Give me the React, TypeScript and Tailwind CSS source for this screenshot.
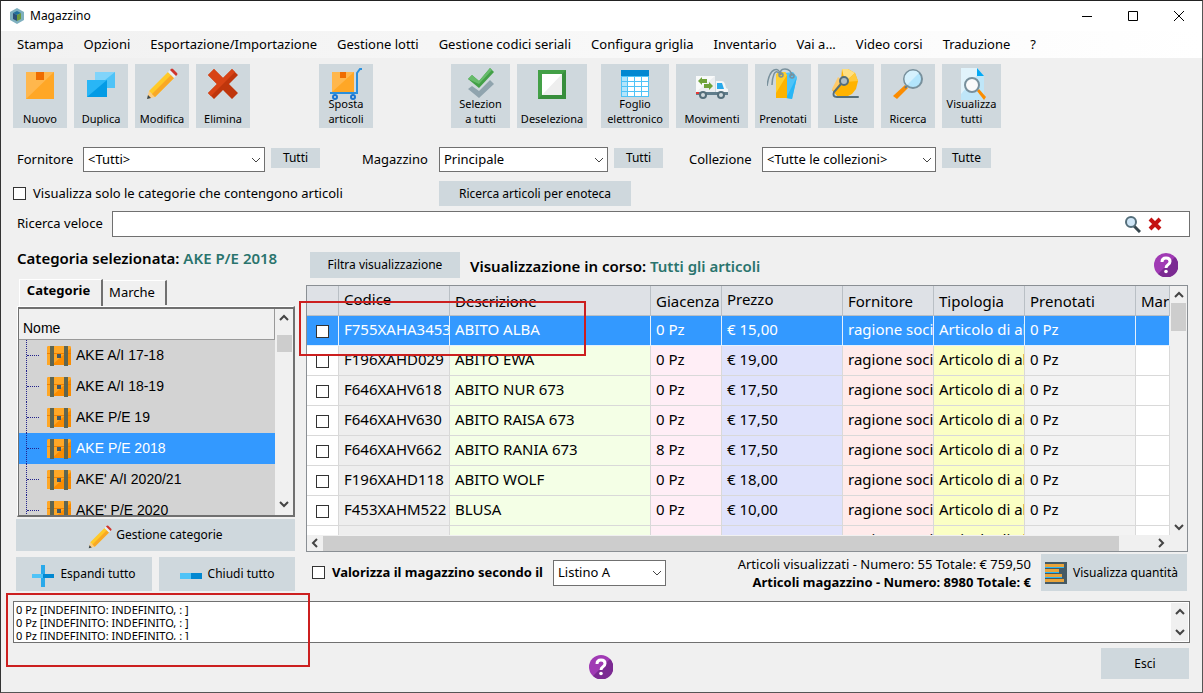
import React, { useState } from "react";

// Toolbar and button drawings

function BoxIcon() {
  return (
    <svg viewBox="0 0 32 32" className="size-8 shrink-0">
      <path d="M2 4h28v27H2z" fill="#ffa726" />
      <path d="M2 4h28L2 31z" fill="#ffb74d" />
      <path d="M12 4h8v8h-8z" fill="#ef6c00" />
    </svg>
  );
}

function DuplicateIcon() {
  return (
    <svg viewBox="0 0 32 32" className="size-8 shrink-0">
      <path d="M10 4h20v16H10z" fill="#4fc3f7" />
      <path d="M10 4h20L10 20z" fill="#81d4fa" />
      <path d="M2 12h20v17H2z" fill="#039be5" />
      <path d="M2 12h20L2 29z" fill="#29b6f6" />
    </svg>
  );
}

function PencilIcon({ className }: { className: string }) {
  return (
    <svg viewBox="0 0 32 32" className={className}>
      <path d="M1 31l2-8 6 6z" fill="#ffcc80" />
      <path d="M1 31l1-4 3 3z" fill="#37474f" />
      <path d="M3 23L22 4l6 6L9 29z" fill="#ffca28" />
      <path d="M6 26L25 7l3 3L9 29z" fill="#f9a825" />
      <path d="M22 4l2-2 6 6-2 2z" fill="#eceff1" />
      <path d="M24 2l1-1q1-1 2 0l4 4q1 1 0 2l-1 1z" fill="#d0342c" />
    </svg>
  );
}

function CrossIcon() {
  return (
    <svg viewBox="0 0 32 32" className="size-8 shrink-0">
      <path d="M7 1l9 9 9-9 6 6-9 9 9 9-6 6-9-9-9 9-6-6 9-9-9-9z" fill="#bf360c" />
      <path d="M7 1l9 9 9-9 3 3L4 28l-3-3 9-9-9-9z" fill="#d84315" />
    </svg>
  );
}

function TrolleyIcon() {
  return (
    <svg viewBox="0 0 32 32" className="size-8 shrink-0">
      <path d="M2 4h22v20H2z" fill="#ffa726" />
      <path d="M2 4h22L2 24z" fill="#ffb74d" />
      <path d="M10 4h6v6h-6z" fill="#ef6c00" />
      <path d="M32 1h-2l-3 4v20H0" fill="none" stroke="#2a8fdc" strokeWidth="2" />
      <circle cx="5" cy="29" r="2" fill="#cfd8dc" stroke="#1976d2" strokeWidth="2" />
      <circle cx="23" cy="29" r="2" fill="#cfd8dc" stroke="#1976d2" strokeWidth="2" />
    </svg>
  );
}

function DoubleCheckIcon() {
  return (
    <svg viewBox="0 0 32 32" className="size-8 shrink-0">
      <path d="M3 21l4-3 7 5 11-11 4 4-15 14z" fill="#90a4ae" />
      <path d="M3 11l4-4 7 6L25 0l4 4-15 16z" fill="#43a047" />
      <path d="M3 11l4-4 7 6L25 0l2 2-13 14z" fill="#66bb6a" />
    </svg>
  );
}

function EmptySquareIcon() {
  return (
    <svg viewBox="0 0 32 32" className="size-8 shrink-0">
      <path d="M2 2h28v29H2z" fill="#388e3c" />
      <path d="M2 2h28L2 31z" fill="#43a047" />
      <path d="M6 6h20v21H6z" fill="#eeeeee" />
      <path d="M6 6h20L6 27z" fill="#fff" />
    </svg>
  );
}

function SheetIcon() {
  return (
    <svg viewBox="0 0 32 32" className="size-8 shrink-0">
      <path d="M2 2h28v27H2z" fill="#4fc3f7" />
      <path d="M2 2h28v6H2z" fill="#0288d1" />
      <path d="M3 9h5v4H3zM3 14h5v4H3zM3 19h5v4H3zM3 24h5v4H3z" fill="#b3e5fc" />
      <path
        d="M9 9h6v4H9zM16 9h6v4h-6zM23 9h6v4h-6zM9 14h6v4H9zM16 14h6v4h-6zM23 14h6v4h-6zM9 19h6v4H9zM16 19h6v4h-6zM23 19h6v4h-6zM9 24h6v4H9zM16 24h6v4h-6zM23 24h6v4h-6z"
        fill="#fff"
      />
    </svg>
  );
}

function TruckIcon() {
  return (
    <svg viewBox="0 0 32 32" className="size-8 shrink-0">
      <path d="M0 8h19v16H0z" fill="#eceff1" />
      <path d="M0 8h19L0 24z" fill="#f8fafa" />
      <path d="M20 13h6q2 0 3 3l1 4 2 1v4H20z" fill="#f4f6f7" />
      <path d="M21 15h5l2 6h-7z" fill="#29a9ea" />
      <path d="M0 24h32v3H0z" fill="#607d8b" />
      <path d="M0 24h3v2H0z" fill="#e53935" />
      <path d="M2 13l4-4v2h5v4H6v2zM17 18l-4-4v2H8v4h5v2z" fill="#6fa33a" />
      <circle cx="7" cy="27" r="4" fill="#546e7a" />
      <circle cx="7" cy="27" r="2" fill="#cfd8dc" />
      <circle cx="25" cy="27" r="4" fill="#546e7a" />
      <circle cx="25" cy="27" r="2" fill="#cfd8dc" />
    </svg>
  );
}

function TagsIcon() {
  return (
    <svg viewBox="0 0 32 32" className="size-8 shrink-0">
      <path d="M18 5l8-1 4 5-5 22-10-2z" fill="#4fc3f7" />
      <path d="M30 9l-5 22-6-1z" fill="#29b6f6" />
      <path d="M9 7l2-3h7l2 3v23H9z" fill="#ffb300" />
      <path d="M9 7l2-3h7l2 3L9 25z" fill="#ffd02e" />
      <g fill="none" stroke="#78909c" strokeWidth="1.500">
        <path d="M14 7Q12 0 7 2T0 18" />
        <path d="M14 7Q9 1 7 6T5 17" />
        <path d="M14 7q-2-6 4-6t7 7" />
        <circle cx="14" cy="7" r="2" />
        <circle cx="25" cy="8" r="2" />
      </g>
    </svg>
  );
}

function ListIcon() {
  return (
    <svg viewBox="0 0 32 32" className="size-8 shrink-0">
      <path d="M12 1l6 0 7 4 3 8-2 8-4 5-6 3H8l-6-7 9-9z" fill="#ffb300" />
      <path d="M12 1l6 0 7 4-10 9z" fill="#ffe082" />
      <path d="M25 5l3 8-13 1z" fill="#ffc93a" />
      <path d="M8 9l4 3-8 11-2-2z" fill="#ffca6a" />
      <path
        d="M11 16l-7 8q-2 5 3 5h21"
        fill="none"
        stroke="#546e7a"
        strokeWidth="2"
        strokeLinecap="round"
      />
      <circle cx="14" cy="13" r="4" fill="#b0bec5" stroke="#546e7a" strokeWidth="2" />
    </svg>
  );
}

function LensIcon() {
  return (
    <svg viewBox="0 0 32 32" className="size-8 shrink-0">
      <path d="M13 17l3 3L5 31l-4-3z" fill="#fb8c00" />
      <path d="M13 20l4-4" stroke="#607d8b" strokeWidth="2" />
      <circle cx="21" cy="11" r="9" fill="#b3e5fc" stroke="#78909c" strokeWidth="2" />
      <path d="M15 17A8 8 0 0 1 27 5z" fill="#d5f1fd" />
    </svg>
  );
}

function PageLensIcon() {
  return (
    <svg viewBox="0 0 32 32" className="size-8 shrink-0">
      <path d="M5 0h16l7 8v24H5z" fill="#bfe6f8" />
      <path d="M5 0h16l3 4L5 26z" fill="#e1f3fb" />
      <path d="M21 0l7 8h-7z" fill="#03a9f4" />
      <path d="M21 23l2-2 7 8-2 3z" fill="#fb8c00" />
      <circle cx="16" cy="17" r="7" fill="#fafafa" stroke="#78909c" strokeWidth="2" />
    </svg>
  );
}

function ChestIcon() {
  return (
    <svg viewBox="0 0 24 20" className="h-5 w-6 shrink-0">
      <path d="M0 2q0-2 2-2h20q2 0 2 2v17H0z" fill="#fb8c00" />
      <path d="M0 2q0-2 2-2h20q2 0 2 2L5 19H0z" fill="#ffa726" />
      <path d="M0 7h24v1H0z" fill="#ef8000" />
      <path d="M3 0h4v20H3zM17 0h4v20h-4z" fill="#5f6550" />
      <path d="M10 8h4v4h-4z" fill="#455a64" />
    </svg>
  );
}

function HelpIcon() {
  return (
    <svg viewBox="0 0 24 24" className="size-6 shrink-0">
      <circle cx="12" cy="12" r="12" fill="#a03ab4" />
      <path d="M21 4A12 12 0 0 1 4 21z" fill="#7b2a92" />
      <path
        d="M8 9q0-4 4-4t4 3.500q0 2-2 3.200T12 15"
        fill="none"
        stroke="#fff"
        strokeWidth="3"
      />
      <circle cx="12" cy="18.500" r="1.800" fill="#fff" />
    </svg>
  );
}

function Chevron({ className }: { className: string }) {
  return (
    <svg viewBox="0 0 10 10" className={className} fill="none" stroke="currentColor">
      <path d="M1 3l4 4 4-4" />
    </svg>
  );
}

// Building blocks

interface ToolButtonProps {
  label: string;
  className: string;
  children: React.ReactNode;
}

function ToolButton({ label, className, children }: ToolButtonProps) {
  return (
    <button
      type="button"
      className={`flex h-16 shrink-0 flex-col items-center bg-[#cfd8dd] pt-1 pb-[2px] hover:bg-[#c0ccd3] ${className}`}
    >
      <span className="h-7">{children}</span>
      <span className="mt-auto text-[11px] leading-[15px] whitespace-pre-line">{label}</span>
    </button>
  );
}

interface ComboProps {
  id: string;
  options: string[];
  className: string;
}

function Combo({ id, options, className }: ComboProps) {
  return (
    <div className={`relative shrink-0 ${className}`}>
      <select
        id={id}
        className="h-full w-full appearance-none border border-[#707070] bg-white pr-5 pl-1 text-[13px] outline-none"
      >
        {options.map((o) => (
          <option key={o}>{o}</option>
        ))}
      </select>
      <Chevron className="pointer-events-none absolute top-2 right-1 size-[10px] text-[#444]" />
    </div>
  );
}

const checkboxClass =
  "size-[13px] shrink-0 appearance-none border border-[#333] bg-white checked:bg-[#3399ff]";

const buttonClass = "shrink-0 bg-[#cfd8dd] text-[12px] hover:bg-[#c0ccd3]";

// Data

const menu = [
  "Stampa",
  "Opzioni",
  "Esportazione/Importazione",
  "Gestione lotti",
  "Gestione codici seriali",
  "Configura griglia",
  "Inventario",
  "Vai a...",
  "Video corsi",
  "Traduzione",
  "?",
];

const categories = [
  "AKE A/I 17-18",
  "AKE A/I 18-19",
  "AKE P/E 19",
  "AKE P/E 2018",
  "AKE' A/I 2020/21",
  "AKE' P/E 2020",
];

interface Article {
  code: string;
  name: string;
  stock: string;
  price: string;
}

const articles: Article[] = [
  { code: "F755XAHA3453", name: "ABITO ALBA", stock: "0 Pz", price: "€ 15,00" },
  { code: "F196XAHD029", name: "ABITO EWA", stock: "0 Pz", price: "€ 19,00" },
  { code: "F646XAHV618", name: "ABITO NUR 673", stock: "0 Pz", price: "€ 17,50" },
  { code: "F646XAHV630", name: "ABITO RAISA 673", stock: "0 Pz", price: "€ 17,50" },
  { code: "F646XAHV662", name: "ABITO RANIA 673", stock: "8 Pz", price: "€ 17,50" },
  { code: "F196XAHD118", name: "ABITO WOLF", stock: "0 Pz", price: "€ 18,00" },
  { code: "F453XAHM522", name: "BLUSA", stock: "0 Pz", price: "€ 10,00" },
  { code: "", name: "", stock: "", price: "" },
];

const noteLine = "0 Pz [INDEFINITO: INDEFINITO, : ]";

function TitleBar() {
  return (
    <header className="flex h-[30px] items-center bg-white pl-[9px]">
      <svg viewBox="0 0 14 16" className="h-4 w-[14px]">
        <path d="M7 0l7 4v8l-7 4-7-4V4z" fill="#7fb0bf" />
        <path d="M7 3l4 2-4 2-4-2z" fill="#1f6f9b" />
        <path d="M3 5l4 2v6l-4-2z" fill="#2b4f76" />
        <path d="M7 7l4-2v6l-4 2z" fill="#6d9a3c" />
      </svg>
      <h1 className="ml-[6px] text-[12px]">Magazzino</h1>
      <div className="ml-auto flex h-full">
        <button type="button" aria-label="Riduci a icona" className="grid w-[46px] place-items-center">
          <svg viewBox="0 0 12 12" className="size-3" stroke="#000">
            <path d="M1 6.500h10" />
          </svg>
        </button>
        <button type="button" aria-label="Ingrandisci" className="grid w-[46px] place-items-center">
          <svg viewBox="0 0 12 12" className="size-3" stroke="#000" fill="none">
            <path d="M1.500 1.500h9v9h-9z" />
          </svg>
        </button>
        <button type="button" aria-label="Chiudi" className="grid w-[46px] place-items-center">
          <svg viewBox="0 0 12 12" className="size-3" stroke="#000">
            <path d="M1 1l10 10M11 1L1 11" />
          </svg>
        </button>
      </div>
    </header>
  );
}

function Toolbar() {
  return (
    <div className="flex pt-[6px] pl-3">
      <div className="flex gap-[7px]">
        <ToolButton label="Nuovo" className="w-[54px]">
          <BoxIcon />
        </ToolButton>
        <ToolButton label="Duplica" className="w-[54px]">
          <DuplicateIcon />
        </ToolButton>
        <ToolButton label="Modifica" className="w-[54px]">
          <PencilIcon className="size-8" />
        </ToolButton>
        <ToolButton label="Elimina" className="w-[54px]">
          <CrossIcon />
        </ToolButton>
      </div>
      <ToolButton label={"Sposta\narticoli"} className="ml-[69px] w-[54px]">
        <TrolleyIcon />
      </ToolButton>
      <div className="ml-[78px] flex gap-[7px]">
        <ToolButton label={"Selezion\na tutti"} className="w-[59px]">
          <DoubleCheckIcon />
        </ToolButton>
        <ToolButton label="Deseleziona" className="w-[70px]">
          <EmptySquareIcon />
        </ToolButton>
      </div>
      <div className="ml-[14px] flex gap-[7px]">
        <ToolButton label={"Foglio\nelettronico"} className="w-[68px]">
          <SheetIcon />
        </ToolButton>
        <ToolButton label="Movimenti" className="w-[72px]">
          <TruckIcon />
        </ToolButton>
        <ToolButton label="Prenotati" className="w-[56px]">
          <TagsIcon />
        </ToolButton>
        <ToolButton label="Liste" className="w-[56px]">
          <ListIcon />
        </ToolButton>
        <ToolButton label="Ricerca" className="w-[54px]">
          <LensIcon />
        </ToolButton>
        <ToolButton label={"Visualizza\ntutti"} className="w-[59px]">
          <PageLensIcon />
        </ToolButton>
      </div>
    </div>
  );
}

function Filters() {
  return (
    <div className="pr-3 pl-4 text-[13px]">
      <div className="mt-[19px] flex h-[25px] items-center">
        <label htmlFor="supplier" className="w-[66px] shrink-0">
          Fornitore
        </label>
        <Combo id="supplier" options={["<Tutti>"]} className="h-[25px] w-[182px]" />
        <button type="button" className={`mb-1 ml-[6px] h-5 w-[49px] ${buttonClass}`}>
          Tutti
        </button>
        <label htmlFor="store" className="ml-[42px] w-[77px] shrink-0">
          Magazzino
        </label>
        <Combo id="store" options={["Principale"]} className="h-[25px] w-[169px]" />
        <button type="button" className={`mb-1 ml-[6px] h-5 w-[49px] ${buttonClass}`}>
          Tutti
        </button>
        <label htmlFor="collection" className="ml-[26px] w-[73px] shrink-0">
          Collezione
        </label>
        <Combo id="collection" options={["<Tutte le collezioni>"]} className="h-[25px] w-[174px]" />
        <button type="button" className={`mb-1 ml-[6px] h-5 w-[49px] ${buttonClass}`}>
          Tutte
        </button>
      </div>
      <div className="-ml-1 mt-[9px] flex h-[25px] items-center">
        <label className="flex w-[426px] shrink-0 items-center gap-[7px]">
          <input type="checkbox" className={checkboxClass} />
          Visualizza solo le categorie che contengono articoli
        </label>
        <button type="button" className={`h-[25px] w-48 ${buttonClass}`}>
          Ricerca articoli per enoteca
        </button>
      </div>
      <div className="mt-[5px] flex items-center">
        <label htmlFor="quick" className="w-[95px] shrink-0">
          Ricerca veloce
        </label>
        <div className="flex h-[26px] flex-1 items-center border border-[#707070] bg-white pr-[27px]">
          <input id="quick" type="text" className="h-full flex-1 px-1 outline-none" />
          <button type="button" aria-label="Cerca">
            <svg viewBox="0 0 17 17" className="size-[17px]">
              <path d="M10 10l6 6" stroke="#37474f" strokeWidth="3" />
              <circle cx="7" cy="6" r="5" fill="#cfe6f7" stroke="#546e7a" strokeWidth="2" />
            </svg>
          </button>
          <button type="button" aria-label="Cancella" className="ml-[7px]">
            <svg viewBox="0 0 14 14" className="size-[14px]">
              <path d="M2 2l10 10M12 2L2 12" stroke="#c41212" strokeWidth="4" />
            </svg>
          </button>
        </div>
      </div>
    </div>
  );
}

interface CategoryPanelProps {
  selected: string;
  onSelect: (name: string) => void;
}

function CategoryPanel({ selected, onSelect }: CategoryPanelProps) {
  return (
    <section className="w-[279px] shrink-0">
      <h2 className="pl-px text-[15px] leading-5 font-semibold whitespace-nowrap">
        Categoria selezionata: <span className="text-[#2a746d]">{selected}</span>
      </h2>
      <div role="tablist" className="mt-[11px] ml-[3px] flex h-[27px] items-end text-[13px]">
        <button
          type="button"
          role="tab"
          aria-selected="true"
          className="h-[27px] w-[84px] border-t border-r-2 border-l border-t-white border-r-[#707070] border-l-white pr-1 pb-1 font-bold"
        >
          Categorie
        </button>
        <button
          type="button"
          role="tab"
          aria-selected="false"
          className="mb-px h-[25px] w-16 border-t border-r-2 border-t-white border-r-[#707070] pr-1"
        >
          Marche
        </button>
      </div>
      <div className="ml-px border-t border-r-2 border-b-2 border-l border-t-white border-r-[#707070] border-b-[#707070] border-l-white">
        <div className="flex h-[208px] border-t-2 border-l border-[#707070]">
          <div className="flex-1 overflow-hidden bg-[#d3d3d3] font-['Liberation_Sans',sans-serif] text-[14px]">
            <div className="flex h-[31px] items-end border-r border-b border-[#999] bg-[#f0f0f0] pl-1">
              Nome
            </div>
            <ul>
              {categories.map((c) => (
                <li key={c}>
                  <button
                    type="button"
                    onClick={() => onSelect(c)}
                    className={`flex h-[31px] w-full items-center pl-[7px] ${
                      c === selected ? "bg-[#3399ff] text-white" : ""
                    }`}
                  >
                    <span className="flex h-full w-[21px] items-center border-l border-dotted border-[#22228c]">
                      <span className="w-3 border-t border-dotted border-[#22228c]" />
                    </span>
                    <ChestIcon />
                    <span className="ml-[5px]">{c}</span>
                  </button>
                </li>
              ))}
            </ul>
          </div>
          <div className="flex w-[18px] flex-col items-center bg-[#f0f0f0] pt-1 pb-[6px] text-[#444]">
            <Chevron className="size-[10px] rotate-180 stroke-2" />
            <div className="mt-3 h-[17px] w-[15px] bg-[#cdcdcd]" />
            <Chevron className="mt-auto size-[10px] stroke-2" />
          </div>
        </div>
      </div>
      <button
        type="button"
        className={`mt-[2px] flex h-8 w-full items-center justify-center gap-1 ${buttonClass}`}
      >
        <PencilIcon className="mt-1 size-6" />
        Gestione categorie
      </button>
      <div className="mt-[6px] grid grid-cols-2 gap-[7px]">
        <button type="button" className={`flex h-[34px] items-center justify-center gap-[6px] ${buttonClass}`}>
          <svg viewBox="0 0 22 22" className="mt-1 size-[22px]">
            <path d="M9 0h4v22H9z" fill="#29a9ea" />
            <path d="M0 9h11v4H0z" fill="#4fc3f7" />
            <path d="M11 9h11v4H11z" fill="#0288d1" />
          </svg>
          Espandi tutto
        </button>
        <button type="button" className={`flex h-[34px] items-center justify-center gap-[6px] ${buttonClass}`}>
          <svg viewBox="0 0 22 22" className="mt-1 size-[22px]">
            <path d="M0 8h11v6H0z" fill="#4fc3f7" />
            <path d="M11 8h11v6H11z" fill="#0288d1" />
          </svg>
          Chiudi tutto
        </button>
      </div>
    </section>
  );
}

function ArticleTable() {
  const [active, setActive] = useState(0);
  const head = "overflow-hidden border-r border-b border-[#b9bfc5] px-[5px] font-normal";
  const cell = "overflow-hidden border-r border-b px-[5px] pb-1";

  return (
    <div className="mt-[7px] border border-[#8a8f94] bg-[#f0f0f0]">
      <div className="flex">
        <div className="h-[249px] min-w-0 flex-1 overflow-hidden bg-white">
          <table className="w-full table-fixed border-separate border-spacing-0 text-left text-[15px] leading-5 whitespace-nowrap">
            <colgroup>
              <col className="w-8" />
              <col className="w-[111px]" />
              <col className="w-[201px]" />
              <col className="w-[71px]" />
              <col className="w-[121px]" />
              <col className="w-[91px]" />
              <col className="w-[91px]" />
              <col className="w-[111px]" />
              <col />
            </colgroup>
            <thead>
              <tr className="h-[30px] bg-[#dee1e6]">
                <th className={head} aria-label="Selezione" />
                <th className={`${head} pb-1`}>Codice</th>
                <th className={head}>Descrizione</th>
                <th className={head}>Giacenza</th>
                <th className={`${head} pb-1`}>Prezzo</th>
                <th className={head}>Fornitore</th>
                <th className={head}>Tipologia</th>
                <th className={head}>Prenotati</th>
                <th className={head}>Marca</th>
              </tr>
            </thead>
            <tbody>
              {articles.map((a, i) => {
                const on = i === active;
                const line = on ? "border-[#e4f0fc]" : "border-[#d9d9d9]";
                return (
                  <tr
                    key={i}
                    onClick={() => setActive(i)}
                    className={`h-[30px] ${on ? "bg-[#3399ff] text-white" : ""}`}
                  >
                    <td className={`overflow-hidden border-r border-b pt-px pl-[9px] ${line}`}>
                      {a.code && (
                        <input
                          type="checkbox"
                          aria-label={`Seleziona ${a.name}`}
                          className={`block ${checkboxClass}`}
                        />
                      )}
                    </td>
                    <td className={`${cell} ${line} ${on ? "" : "bg-[#eeeeee]"}`}>{a.code}</td>
                    <td className={`${cell} ${line} ${on ? "" : "bg-[#f4ffe6]"}`}>{a.name}</td>
                    <td className={`${cell} ${line} ${on ? "" : "bg-[#ffeef6]"}`}>{a.stock}</td>
                    <td className={`${cell} ${line} ${on ? "" : "bg-[#dfe2fc]"}`}>{a.price}</td>
                    <td className={`${cell} ${line} ${on ? "" : "bg-[#ffebeb]"}`}>ragione socia</td>
                    <td className={`${cell} ${line} ${on ? "" : "bg-[#fbffc4]"}`}>Articolo di al</td>
                    <td className={`${cell} ${line} ${on ? "" : "bg-[#f3f3f3]"}`}>
                      {a.code ? "0 Pz" : ""}
                    </td>
                    <td className={`${cell} ${line}`} />
                  </tr>
                );
              })}
            </tbody>
          </table>
        </div>
        <div className="flex w-[17px] flex-col items-center pt-1 pb-[3px] text-[#444]">
          <Chevron className="size-[10px] rotate-180 stroke-2" />
          <div className="mt-[3px] h-7 w-[15px] bg-[#cdcdcd]" />
          <Chevron className="mt-auto size-[10px] stroke-2" />
        </div>
      </div>
      <div className="flex h-4 items-center pr-[21px] text-[#444]">
        <Chevron className="mx-[3px] size-[10px] rotate-90 stroke-2" />
        <div className="mr-[37px] h-[15px] flex-1 bg-[#cdcdcd]" />
        <Chevron className="size-[10px] -rotate-90 stroke-2" />
      </div>
    </div>
  );
}

function ArticlePanel() {
  return (
    <section className="min-w-0 flex-1">
      <div className="mt-1 flex h-[26px] items-center pl-1">
        <button type="button" className={`h-[26px] w-[150px] ${buttonClass}`}>
          Filtra visualizzazione
        </button>
        <h2 className="mt-[2px] ml-[10px] text-[15px] font-semibold">
          Visualizzazione in corso: <span className="text-[#2a746d]">Tutti gli articoli</span>
        </h2>
        <button type="button" aria-label="Aiuto" className="mr-[10px] ml-auto">
          <HelpIcon />
        </button>
      </div>
      <ArticleTable />
      <div className="mt-[2px] flex h-[37px] items-center pl-[6px] text-[13px]">
        <label className="flex w-[241px] shrink-0 items-center gap-[7px] font-bold whitespace-nowrap">
          <input type="checkbox" className={checkboxClass} />
          Valorizza il magazzino secondo il
        </label>
        <Combo id="pricelist" options={["Listino A"]} className="h-[26px] w-[113px]" />
        <div className="ml-auto text-right leading-[18px] whitespace-nowrap">
          <p>Articoli visualizzati - Numero: 55 Totale: € 759,50</p>
          <p className="font-bold">Articoli magazzino - Numero: 8980 Totale: €</p>
        </div>
        <button
          type="button"
          className={`mr-px ml-[10px] flex h-[37px] w-[146px] items-center gap-[6px] pl-1 whitespace-nowrap ${buttonClass}`}
        >
          <svg viewBox="0 0 22 22" className="size-[22px] shrink-0">
            <path d="M0 0h22v22H0z" fill="#455a64" />
            <path d="M0 2h19v3H0zM0 7h14v3H0zM0 12h17v3H0zM0 17h19v3H0z" fill="#e9a43a" />
            <path d="M0 5h19v1H0zM0 10h14v1H0zM0 15h17v1H0z" fill="#29b6f6" />
          </svg>
          Visualizza quantità
        </button>
      </div>
    </section>
  );
}

export default function App() {
  const [category, setCategory] = useState("AKE P/E 2018");

  return (
    <div className="relative min-w-[1100px] border border-[#555] border-t-[#222] border-l-[#333] bg-[#f0f0f0] font-['Noto_Sans',sans-serif] text-[13px] text-black">
      <TitleBar />
      <nav className="flex h-[27px] items-center gap-5 bg-linear-to-r from-[#f1f1f1] to-white pl-4 whitespace-nowrap">
        {menu.map((item) => (
          <button key={item} type="button">
            {item}
          </button>
        ))}
      </nav>
      <Toolbar />
      <Filters />
      <main className="mt-[11px] flex gap-[11px] pr-[14px] pl-[15px]">
        <CategoryPanel selected={category} onSelect={setCategory} />
        <ArticlePanel />
      </main>
      <div className="mt-[10px] mr-3 ml-3 flex h-[42px] border border-[#707070] bg-white p-px">
        <textarea
          readOnly
          aria-label="Dettaglio giacenze"
          value={[noteLine, noteLine, noteLine].join("\n")}
          className="h-[37px] flex-1 resize-none overflow-hidden pl-px text-[11px] leading-[13px] outline-none"
        />
        <div className="flex w-[17px] flex-col items-center justify-between bg-[#f0f0f0] py-1 text-[#444]">
          <Chevron className="size-[10px] rotate-180 stroke-2" />
          <Chevron className="size-[10px] stroke-2" />
        </div>
      </div>
      <footer className="mt-[5px] grid grid-cols-3 items-start px-[13px] pb-[13px]">
        <button type="button" aria-label="Aiuto" className="col-start-2 mt-[7px] justify-self-center">
          <HelpIcon />
        </button>
        <button type="button" className={`h-[31px] w-[88px] justify-self-end ${buttonClass}`}>
          Esci
        </button>
      </footer>

      {/* Highlight frames over the first row and the notes box */}
      <div className="pointer-events-none absolute top-[300px] left-[298px] h-[55px] w-[287px] border-2 border-[#cc1f1f]" />
      <div className="pointer-events-none absolute top-[592px] left-[5px] h-[74px] w-[304px] border-2 border-[#cc1f1f]" />
    </div>
  );
}
